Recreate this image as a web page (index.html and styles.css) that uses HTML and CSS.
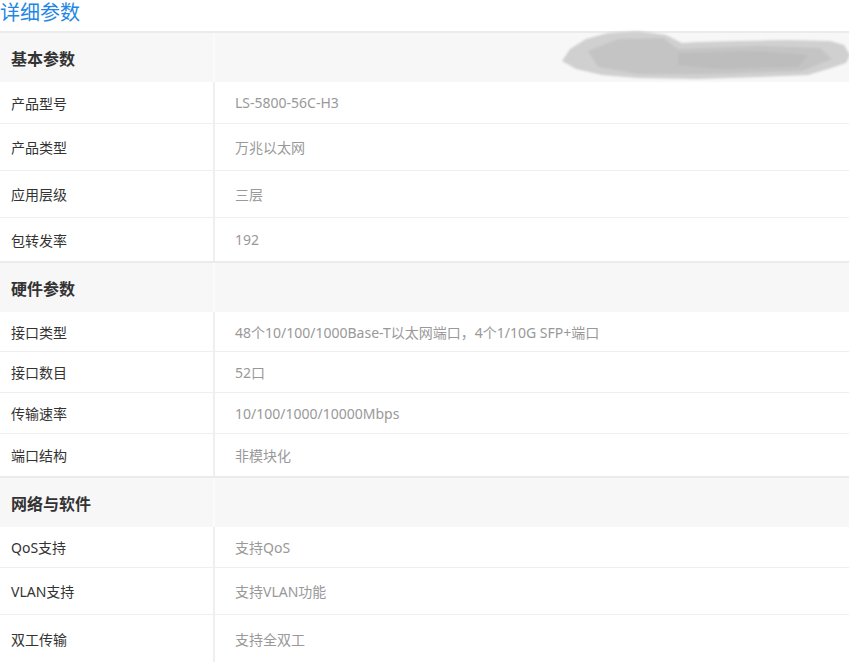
FILE: index.html
```html
<!DOCTYPE html>
<html lang="zh-CN">
<head>
    <meta charset="UTF-8">
    <meta name="viewport" content="width=device-width, initial-scale=1.0">
    <title>详细参数</title>
    <link rel="stylesheet" href="styles.css">
</head>
<body>
    <h3 class="title">详细参数</h3>
    <div class="params">
        <div class="section">
            <div class="row head">
                <div class="key">基本参数</div>
                <div class="val">
                    <!-- redacted area -->
                    <svg class="smudge" width="300" height="56" viewBox="0 0 300 56">
                        <defs>
                            <filter id="soft" x="-10%" y="-30%" width="120%" height="160%">
                                <feGaussianBlur stdDeviation="0.8"/>
                            </filter>
                        </defs>
                        <g filter="url(#soft)">
                            <polygon points="4,32 12,20 28,10 50,4 80,2 108,6 124,14 140,13 180,12 230,11 272,12 286,16 292,26 288,34 270,40 250,46 200,48 140,50 80,49 44,46 18,40" fill="#d0d0d0"/>
                            <polygon points="30,22 60,10 105,9 120,20 200,17 262,19 274,30 244,42 150,45 80,45 40,38" fill="#c4c4c4"/>
                            <polygon points="120,24 200,22 250,26 240,38 160,40 120,36" fill="#bdbdbd"/>
                        </g>
                    </svg>
                </div>
            </div>
            <div class="row r42">
                <div class="key">产品型号</div>
                <div class="val">LS-5800-56C-H3</div>
            </div>
            <div class="row tall">
                <div class="key">产品类型</div>
                <div class="val">万兆以太网</div>
            </div>
            <div class="row tall">
                <div class="key">应用层级</div>
                <div class="val">三层</div>
            </div>
            <div class="row r43">
                <div class="key">包转发率</div>
                <div class="val">192</div>
            </div>
        </div>
        <div class="section">
            <div class="row head">
                <div class="key">硬件参数</div>
                <div class="val"></div>
            </div>
            <div class="row r40">
                <div class="key">接口类型</div>
                <div class="val">48个10/100/1000Base-T以太网端口，4个1/10G SFP+端口</div>
            </div>
            <div class="row">
                <div class="key">接口数目</div>
                <div class="val">52口</div>
            </div>
            <div class="row">
                <div class="key">传输速率</div>
                <div class="val">10/100/1000/10000Mbps</div>
            </div>
            <div class="row r42">
                <div class="key">端口结构</div>
                <div class="val">非模块化</div>
            </div>
        </div>
        <div class="section">
            <div class="row head">
                <div class="key">网络与软件</div>
                <div class="val"></div>
            </div>
            <div class="row">
                <div class="key">QoS支持</div>
                <div class="val">支持QoS</div>
            </div>
            <div class="row tall">
                <div class="key">VLAN支持</div>
                <div class="val">支持VLAN功能</div>
            </div>
            <div class="row tall">
                <div class="key">双工传输</div>
                <div class="val">支持全双工</div>
            </div>
        </div>
    </div>
</body>
</html>
```

FILE: styles.css
```css
body {
    margin: 0;
    padding: 0;
    background: #fff;
    font-family: "Microsoft YaHei", "Noto Sans", "Noto Sans CJK SC", sans-serif;
    color: #333;
}
.title {
    margin: 0;
    height: 31px;
    line-height: 26px;
    font-size: 20px;
    font-weight: normal;
    color: #2386e4;
}
.section {
    border-top: 2px solid #ebebeb;
}
.row {
    display: grid;
    grid-template-columns: 213px 1fr;
    height: 41px;
    border-bottom: 1px solid #efefef;
    box-sizing: border-box;
}
.row.r40 {
    height: 40px;
}
.row.r42 {
    height: 42px;
}
.row.r43 {
    height: 43px;
}
.row.tall {
    height: 47px;
}
.section .row:last-child {
    border-bottom: none;
}
.row .key {
    display: flex;
    align-items: center;
    padding-left: 11px;
    font-size: 14px;
    color: #333;
}
.row .val {
    display: flex;
    align-items: center;
    padding-left: 20px;
    font-size: 14px;
    color: #999;
    border-left: 2px solid #efefef;
}
.row.head {
    height: 49px;
    background: #f7f7f7;
    border-bottom: none;
}
.row.head .key {
    font-size: 16px;
    font-weight: bold;
    color: #333;
}
.row.head .val {
    position: relative;
    border-left-color: #fbfbfb;
}
.smudge {
    position: absolute;
    left: 343px;
    top: -4px;
}
```
